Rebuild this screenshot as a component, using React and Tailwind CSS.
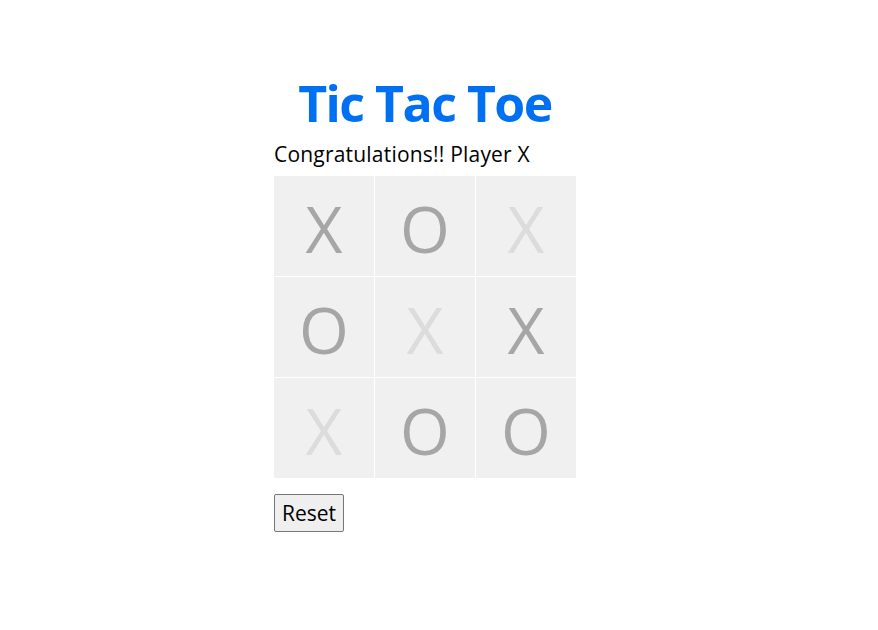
import { useState } from "react"

const cells = [
    { v: "X", win: false },
    { v: "O", win: false },
    { v: "X", win: true },
    { v: "O", win: false },
    { v: "X", win: true },
    { v: "X", win: false },
    { v: "X", win: true },
    { v: "O", win: false },
    { v: "O", win: false },
]

const App = () => {
    const [board] = useState(cells)

    return (
        <div className="min-h-screen bg-white font-['Open_Sans',sans-serif] text-black">
            <div className="ml-[274px] w-[302px] pt-[71px]">
                <h1 className="text-center text-[50px] leading-[64px] font-bold tracking-[-1.5px] text-[#0070f3]">Tic Tac Toe</h1>
                <p className="mt-[5px] text-[21px] leading-[28px] tracking-[0.2px]">Congratulations!! Player X</p>
                <div className="mt-[8px] grid grid-cols-[100px_100px_100px] gap-[1px]">
                    {board.map((cell, i) => (
                        <div
                            key={i}
                            className={`h-[100px] pt-[6px] flex items-center justify-center bg-[#f0f0f0] text-[64px] ${cell.win ? "text-[#dcdcdc]" : "text-[#a6a6a6]"}`}
                        >
                            {cell.v}
                        </div>
                    ))}
                </div>
                <button className="mt-[16px] px-[7px] pt-[2px] h-[38px] text-[21px] bg-[#efefef] border border-[#767676] rounded-[2px]">
                    Reset
                </button>
            </div>
        </div>
    )
}

export default App
